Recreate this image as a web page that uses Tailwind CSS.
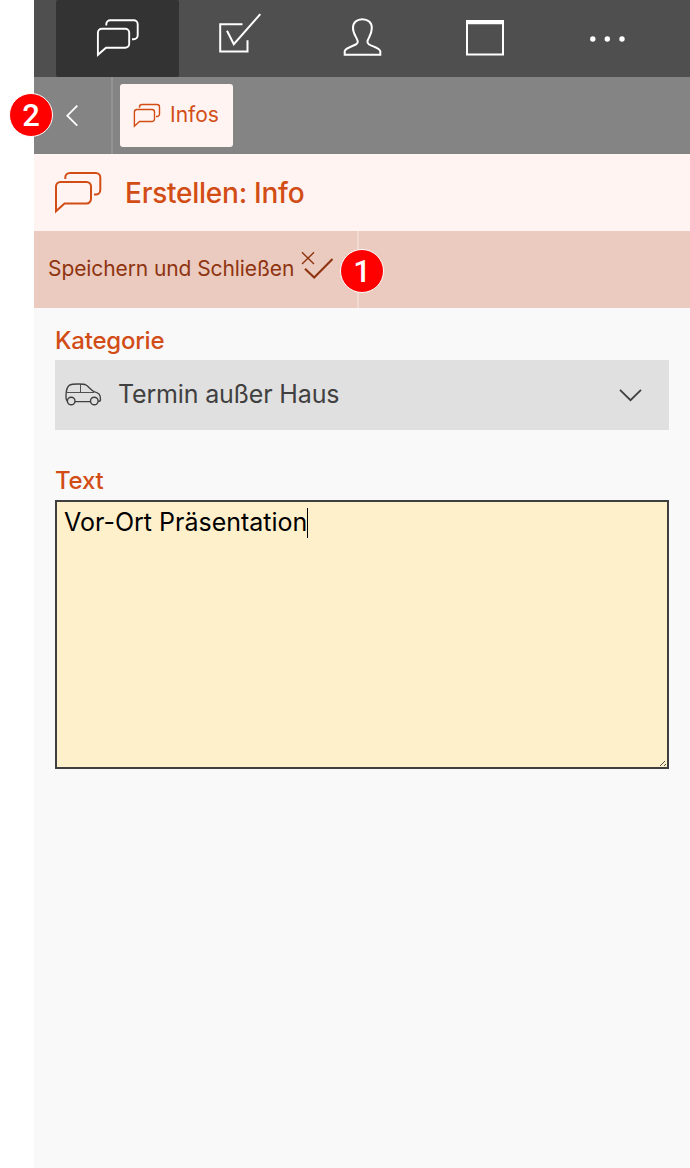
<!DOCTYPE html>
<html lang="de">
<head>
<meta charset="utf-8">
<title>Erstellen: Info</title>
<script src="https://cdn.jsdelivr.net/npm/@tailwindcss/browser@4"></script>
</head>
<body class="relative h-[1168px] w-[690px] overflow-hidden bg-white pl-[34px] font-['Inter',sans-serif]">
<main class="flex h-full w-[656px] flex-col bg-[#f9f9f9]">
  <nav class="flex h-[77px] shrink-0 bg-[#4f4f4f] pl-[22px] text-white">
    <div class="h-[77px] w-[123px] shrink-0 rounded-[2px] bg-[#333333]">
      <svg class="h-full w-full" viewBox="56 0 123 77" fill="none" stroke="currentColor" stroke-width="1.9"><path d="M97.9 54.8V32.7a4 4 0 0 1 4-4H125.2a4 4 0 0 1 4 4V43.7a4 4 0 0 1-4 4H106ZM106.3 25.5V24.3a4 4 0 0 1 4-4H133.7a4 4 0 0 1 4 4V35.3a4 4 0 0 1-4 4H132"/></svg>
    </div>
    <div class="h-full w-[123px] shrink-0">
      <svg class="h-full w-full" viewBox="179 0 123 77" fill="none" stroke="currentColor" stroke-width="2"><path d="M242.5 24.3H220.2V51.5H247.5V40.2M227 30.8L233.8 44.2L260.3 14.2"/></svg>
    </div>
    <div class="h-full w-[122px] shrink-0">
      <svg class="h-full w-full" viewBox="302 0 122 77" fill="none" stroke="currentColor" stroke-width="2"><path d="M344.7 54.7V51.3C345.5 47.5 353 46.5 356.4 44.2C358.8 42.5 357.7 40.5 356 37.2C354.4 34.2 353 31.7 353 28.2C352.8 22.5 357 19.2 362.4 19.2S372 22.5 371.8 28.2C371.8 31.7 370.7 34.2 369.2 37.2C367.5 40.5 366.4 42.5 368.8 44.2C372 46.5 379.5 47.5 380.3 51.3V54.7Z"/></svg>
    </div>
    <div class="h-full w-[123px] shrink-0">
      <svg class="h-full w-full" viewBox="424 0 123 77" fill="none" stroke="currentColor" stroke-width="2"><path d="M467 21H503V54.5H467Z"/><path d="M466 22.2H504" stroke-width="4"/></svg>
    </div>
    <div class="h-full w-[122px] shrink-0">
      <svg class="h-full w-full" viewBox="547 0 122 77" fill="currentColor"><circle cx="592.8" cy="39" r="2.7"/><circle cx="607.3" cy="39" r="2.7"/><circle cx="622" cy="39" r="2.7"/></svg>
    </div>
  </nav>
  <div class="flex h-[77px] shrink-0 bg-[#848484]">
    <div class="h-full w-[79px] shrink-0 border-r-2 border-[#929292] text-white">
      <svg class="h-full w-[77px]" viewBox="34 77 77 77" fill="none" stroke="currentColor" stroke-width="1.8"><path d="M77.3 105.7L67.3 115.7L77.3 125.7"/></svg>
    </div>
    <div class="mt-[7px] ml-[7px] flex h-[63px] w-[113px] items-center rounded-[3px] bg-[#fff4f1] text-[#d24d16]">
      <svg class="h-[63px] w-[50px]" viewBox="120 84 50 63" fill="none" stroke="currentColor" stroke-width="1.4"><path d="M134.4 126.2V112a2.5 2.5 0 0 1 2.5-2.5H152a2.5 2.5 0 0 1 2.5 2.5V119a2.5 2.5 0 0 1-2.5 2.5H139.5ZM139.5 107.8V107a2.5 2.5 0 0 1 2.5-2.5H157a2.5 2.5 0 0 1 2.5 2.5V114a2.5 2.5 0 0 1-2.5 2.5H156"/></svg>
      <span class="pb-[2px] text-[21px] leading-[30px]">Infos</span>
    </div>
  </div>
  <header class="flex h-[77px] shrink-0 items-center bg-[#fff4f1] text-[#d24d16]">
    <svg class="h-[77px] w-[91px]" viewBox="34 154 91 77" fill="none" stroke="currentColor" stroke-width="2"><path d="M56 211.3V186.5a4.5 4.5 0 0 1 4.5-4.5H86.5a4.5 4.5 0 0 1 4.5 4.5V199a4.5 4.5 0 0 1-4.5 4.5H64.5ZM65.3 179V177.5a4.5 4.5 0 0 1 4.5-4.5H95.8a4.5 4.5 0 0 1 4.5 4.5V190a4.5 4.5 0 0 1-4.5 4.5H94"/></svg>
    <h1 class="pt-px text-[28px] leading-[40px] font-medium tracking-[-0.25px]">Erstellen: Info</h1>
  </header>
  <div class="flex h-[77px] shrink-0 bg-[#ebcbbf] text-[#8e3410]">
    <div class="flex h-full w-[325px] items-center border-r-2 border-[#f1dad1] pl-[14px]">
      <span class="w-[250px] shrink-0 pb-[2px] text-[21px] leading-[30px] tracking-[-0.09px] whitespace-nowrap">Speichern und Schließen</span>
      <svg class="h-[77px] w-[40px] shrink-0" viewBox="298 231 40 77" fill="none" stroke="currentColor"><path d="M302 252.3L314 264M314 252.3L302 264" stroke-width="1.4"/><path d="M305 268.7L314.2 277.5L332.5 259" stroke-width="2.1"/></svg>
    </div>
  </div>
  <section class="px-[21px] pt-[16px]">
    <div class="h-[36px] text-[24px] leading-[34px] font-medium tracking-[-0.22px] text-[#d24d16]">Kategorie</div>
    <div class="flex h-[70px] w-[614px] items-center bg-[#e0e0e0] text-[#404040]">
      <svg class="h-[70px] w-[63px]" viewBox="55 360 63 70" fill="none" stroke="currentColor" stroke-width="1.4"><circle cx="71.2" cy="401" r="3.8"/><circle cx="94.3" cy="401" r="3.8"/><path d="M75 401.6H90.5M67.4 401C65.8 400.2 66 398.8 66 396.5C66 391 67.5 386.5 69.5 385.2C72 383.8 83.5 383.6 86 385C88.5 386.5 91 390 94 391.6C99 392.7 100.5 394.7 100.5 399.5C100.5 400.8 99.5 401.4 98.1 401.4"/><path d="M66.5 392.5H94M80.5 384V392.5" stroke-width=".9"/></svg>
      <span class="grow pb-[2px] text-[25px] leading-[36px] tracking-[-0.17px]">Termin außer Haus</span>
      <svg class="h-[70px] w-[70px]" viewBox="599 360 70 70" fill="none" stroke="currentColor" stroke-width="1.8"><path d="M620 389.8L630.5 400.2L641 389.8"/></svg>
    </div>
    <div class="mt-[34px] h-[36px] text-[24px] leading-[34px] font-medium tracking-[-0.22px] text-[#d24d16]">Text</div>
    <div class="relative flex h-[269px] w-[614px] items-start border-2 border-[#403f3f] bg-[#fff0cc] px-[7px] pt-[6px] text-black">
      <span class="-mt-px text-[25px] leading-[30px]">Vor-Ort Präsentation</span>
      <span class="h-[30px] w-px bg-black"></span>
      <svg class="absolute right-0 bottom-0 h-[8px] w-[8px]" viewBox="0 0 8 8" stroke="#55504a" stroke-width="1"><path d="M1 7L6 2M5 7L7 5"/></svg>
    </div>
  </section>
</main>
<div class="absolute top-[249px] left-[340px] flex h-[44px] w-[44px] items-center justify-center rounded-full border border-white bg-[#ff0000] font-['Roboto',sans-serif] text-[31px] leading-none font-medium text-white">1</div>
<div class="absolute top-[93px] left-[9px] flex h-[44px] w-[44px] items-center justify-center rounded-full border border-white bg-[#ff0000] font-['Roboto',sans-serif] text-[31px] leading-none font-medium text-white">2</div>
</body>
</html>
